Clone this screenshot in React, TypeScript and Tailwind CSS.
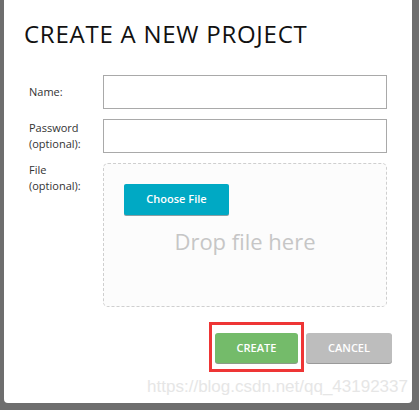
import React from "react";

export default function App() {
  const sans = { fontFamily: '"Open Sans", "Liberation Sans", sans-serif' };
  return (
    <div className="w-[419px] h-[410px] bg-[#6e6e6e] pl-[4px] pr-[7px] pb-[7px] overflow-hidden" style={sans}>
      <div className="relative h-full bg-white rounded-b-[4px] flex flex-col">
        <h1 className="pl-[20px] pt-[20px] text-[24px] leading-[28px] text-[#111] font-normal tracking-[0.75px]">
          CREATE A NEW PROJECT
        </h1>

        <div className="mt-[27px] pl-[25px] pr-[25px] flex flex-col gap-[10px]">
          <div className="flex items-center">
            <label className="w-[74px] text-[11px] text-[#333]">Name:</label>
            <div className="flex-1 h-[34px] border border-[#a9a9a9] bg-white" />
          </div>
          <div className="flex items-start">
            <label className="w-[74px] text-[11px] leading-[16px] text-[#333] pt-[1px]">
              Password
              <br />
              (optional):
            </label>
            <div className="flex-1 h-[34px] border border-[#a9a9a9] bg-white" />
          </div>
          <div className="flex items-start">
            <label className="w-[74px] text-[11px] leading-[16px] text-[#333] -mt-[1px]">
              File
              <br />
              (optional):
            </label>
            <div className="flex-1 h-[144px] border border-dashed border-[#cfcfcf] rounded-[5px] bg-[#fcfcfc] flex flex-col pl-[20px] pt-[20px]">
              <button className="w-[105px] h-[31px] bg-[#00a9c4] text-white text-[11px] font-semibold rounded-[2px] shadow-[0_1px_0_#8a9ea3]">
                Choose File
              </button>
              <div className="pr-[20px] mt-[11px] text-center text-[22px] leading-[30px] text-[#c6c6c6]">
                Drop file here
              </div>
            </div>
          </div>
        </div>

        <div className="mt-[26px] pr-[20px] flex justify-end gap-[8px]">
          <div className="relative">
            <button className="w-[83px] h-[30px] bg-[#74bb6a] text-white text-[11px] font-semibold rounded-[3px] shadow-[0_1px_0_#8b9c88]">
              CREATE
            </button>
            <div className="absolute -left-[6px] -top-[11px] w-[95px] h-[50px] border-[3px] border-[#ee3535] pointer-events-none" />
          </div>
          <button className="w-[86px] h-[30px] bg-[#bdbdbd] text-white text-[11px] font-semibold rounded-[3px] shadow-[0_1px_0_#9a9a9a]">
            CANCEL
          </button>
        </div>

        <div
          className="absolute right-[4px] bottom-[6px] text-[17px] text-[#e6e6e6] leading-[20px]"
          style={{ fontFamily: '"Liberation Sans", Arial, sans-serif' }}
        >
          https://blog.csdn.net/qq_43192337
        </div>
      </div>
    </div>
  );
}
